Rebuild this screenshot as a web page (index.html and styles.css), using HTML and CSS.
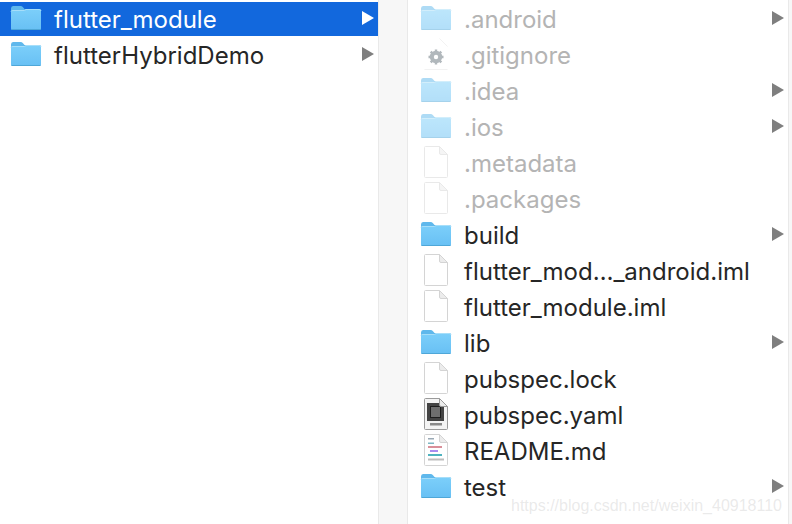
FILE: index.html
```html
<!DOCTYPE html>
<html>
<head>
    <title>Finder</title>
    <meta name="viewport" content="width=device-width, initial-scale=1.0">
    <link rel="stylesheet" href="styles.css">
</head>
<body>
    <svg class="defs" width="0" height="0">
        <defs>
            <linearGradient id="folder-front" x1="0" y1="0" x2="0" y2="1">
                <stop offset="0" stop-color="#7ccffa"/>
                <stop offset="1" stop-color="#68c0f4"/>
            </linearGradient>
        </defs>
        <symbol id="folder" viewBox="0 0 32 26">
            <path d="M1 3.500 Q1 1 3 1 H10.500 Q12 1 13 2.200 L14.500 4 H29 Q31 4 31 6 V23 Q31 25 29 25 H3 Q1 25 1 23 Z" fill="#5fb8ec"/>
            <path d="M1 7 Q1 5.500 3 5.500 H14 L16 4 H29 Q31 4 31 6 V23 Q31 25 29 25 H3 Q1 25 1 23 Z" fill="url(#folder-front)"/>
            <path d="M1 6.500 Q1 5.500 3 5.500 H14.500 L16 4.500 H29 Q31 4.500 31 6" fill="none" stroke="#a6def9" stroke-width="1"/>
            <path d="M1.500 24.500 H30.500" stroke="#4ea7d8" stroke-width="1"/>
        </symbol>
        <symbol id="file" viewBox="0 0 24 32">
            <path d="M.5 1.500 Q.5 .5 1.500 .5 H15.500 L23.500 8.500 V30.500 Q23.500 31.500 22.500 31.500 H1.500 Q.5 31.500 .5 30.500 Z" fill="#fff" stroke="#d4d4d4"/>
            <path d="M15.500 .5 V7 Q15.500 8.500 17 8.500 H23.500 Z" fill="#ececec" stroke="#d4d4d4"/>
        </symbol>
        <symbol id="arrow" viewBox="0 0 12 14">
            <path d="M0 0 L12 7 L0 14 Z" fill="currentColor"/>
        </symbol>
    </svg>

    <div class="column parent">
        <div class="row selected">
            <svg class="icon folder"><use href="#folder"/></svg>
            <span class="name">flutter_module</span>
            <svg class="arrow"><use href="#arrow"/></svg>
        </div>
        <div class="row">
            <svg class="icon folder"><use href="#folder"/></svg>
            <span class="name">flutterHybridDemo</span>
            <svg class="arrow"><use href="#arrow"/></svg>
        </div>
    </div>

    <div class="divider"></div>

    <div class="column files">
        <div class="row hidden">
            <svg class="icon folder"><use href="#folder"/></svg>
            <span class="name">.android</span>
            <svg class="arrow"><use href="#arrow"/></svg>
        </div>
        <div class="row hidden">
            <svg class="icon doc" viewBox="0 0 24 32">
                <path d="M.5 31.500 H23.500 M15.500 .5 L23.500 8.500" stroke="#e6e6e6" fill="none"/>
                <circle cx="12" cy="19" r="4.500" fill="none" stroke="#66737c" stroke-width="3.400"/>
                <path d="M12 11.500 V26.500 M4.500 19 H19.500 M6.700 13.700 L17.300 24.300 M17.300 13.700 L6.700 24.300" stroke="#66737c" stroke-width="2.400"/>
                <circle cx="12" cy="19" r="2.200" fill="#fff"/>
            </svg>
            <span class="name">.gitignore</span>
        </div>
        <div class="row hidden">
            <svg class="icon folder"><use href="#folder"/></svg>
            <span class="name">.idea</span>
            <svg class="arrow"><use href="#arrow"/></svg>
        </div>
        <div class="row hidden">
            <svg class="icon folder"><use href="#folder"/></svg>
            <span class="name">.ios</span>
            <svg class="arrow"><use href="#arrow"/></svg>
        </div>
        <div class="row hidden">
            <svg class="icon doc"><use href="#file"/></svg>
            <span class="name">.metadata</span>
        </div>
        <div class="row hidden">
            <svg class="icon doc"><use href="#file"/></svg>
            <span class="name">.packages</span>
        </div>
        <div class="row">
            <svg class="icon folder"><use href="#folder"/></svg>
            <span class="name">build</span>
            <svg class="arrow"><use href="#arrow"/></svg>
        </div>
        <div class="row">
            <svg class="icon doc"><use href="#file"/></svg>
            <span class="name">flutter_mod…_android.iml</span>
        </div>
        <div class="row">
            <svg class="icon doc"><use href="#file"/></svg>
            <span class="name">flutter_module.iml</span>
        </div>
        <div class="row">
            <svg class="icon folder"><use href="#folder"/></svg>
            <span class="name">lib</span>
            <svg class="arrow"><use href="#arrow"/></svg>
        </div>
        <div class="row">
            <svg class="icon doc"><use href="#file"/></svg>
            <span class="name">pubspec.lock</span>
        </div>
        <div class="row">
            <svg class="icon doc" viewBox="0 0 24 32">
                <path d="M.5 1.500 Q.5 .5 1.500 .5 H15.500 L23.500 8.500 V30.500 Q23.500 31.500 22.500 31.500 H1.500 Q.5 31.500 .5 30.500 Z" fill="#f4f4f4" stroke="#9a9a9a"/>
                <rect x="3" y="5" width="17" height="18" fill="#444"/>
                <rect x="6.500" y="8.500" width="10" height="11" fill="#6e6e6e" stroke="#1e1e1e"/>
                <path d="M15.500 .5 V7 Q15.500 8.500 17 8.500 H23.500 Z" fill="#ececec" stroke="#9a9a9a"/>
                <rect x="6" y="25" width="12" height="2.500" fill="#8a8a8a"/>
            </svg>
            <span class="name">pubspec.yaml</span>
        </div>
        <div class="row">
            <svg class="icon doc" viewBox="0 0 24 32">
                <use href="#file"/>
                <rect x="4" y="4" width="6" height="1.500" fill="#9aa9b5"/>
                <rect x="4" y="8.500" width="6" height="1.500" fill="#7fb8c4"/>
                <rect x="4" y="12" width="14" height="2" fill="#d98f99"/>
                <rect x="6" y="16" width="8" height="2" fill="#a98cf0"/>
                <rect x="4" y="20" width="14" height="2" fill="#4fb3bf"/>
                <rect x="4" y="24.500" width="16" height="2" fill="#bdbdbd"/>
            </svg>
            <span class="name">README.md</span>
        </div>
        <div class="row">
            <svg class="icon folder"><use href="#folder"/></svg>
            <span class="name">test</span>
            <svg class="arrow"><use href="#arrow"/></svg>
        </div>
    </div>

    <div class="edge"></div>

    <span class="watermark">https://blog.csdn.net/weixin_40918110</span>
</body>
</html>
```

FILE: styles.css
```css
html, body {
    height: 100%;
    margin: 0;
    overflow: hidden;
}

body {
    display: flex;
    background: #fff;
    font-family: "Inter", "Liberation Sans", sans-serif;
    font-size: 24px;
    color: #262626;
    position: relative;
}

.defs {
    position: absolute;
}

.column {
    display: flex;
    flex-direction: column;
    padding-top: 1px;
    flex-shrink: 0;
    box-sizing: border-box;
}

.parent {
    width: 378px;
}

.files {
    width: 380px;
    padding-left: 2px;
}

.divider {
    width: 30px;
    flex-shrink: 0;
    box-sizing: border-box;
    background: #f7f7f7;
    border-left: 1px solid #e9e9e9;
    border-right: 1px solid #e9e9e9;
}

.edge {
    flex: 1;
    background: #f7f7f7;
    border-left: 1px solid #e9e9e9;
}

.row {
    height: 36px;
    flex-shrink: 0;
    display: flex;
    align-items: center;
    color: #262626;
}

.icon {
    flex-shrink: 0;
}

.folder {
    width: 32px;
    height: 26px;
    margin-left: 10px;
    margin-right: 12px;
    margin-bottom: 2px;
}

.doc {
    width: 24px;
    height: 32px;
    margin-left: 14px;
    margin-right: 16px;
    margin-bottom: 2px;
}

.name {
    flex: 1;
    white-space: nowrap;
}

.arrow {
    width: 12px;
    height: 14px;
    margin-right: 4px;
    margin-bottom: 2px;
    flex-shrink: 0;
    color: #7f7f7f;
}

.selected {
    background: #1268dd;
    color: #fff;
    height: 34px;
    margin-top: 1px;
    margin-bottom: 1px;
}

.selected .arrow {
    color: #fff;
}

.hidden .name {
    color: #b4b4b4;
}

.hidden .icon {
    opacity: .5;
}

.watermark {
    position: absolute;
    left: 511px;
    top: 497px;
    font-family: "Liberation Sans", sans-serif;
    font-size: 16px;
    color: rgba(190, 190, 190, .32);
    white-space: nowrap;
}
```
